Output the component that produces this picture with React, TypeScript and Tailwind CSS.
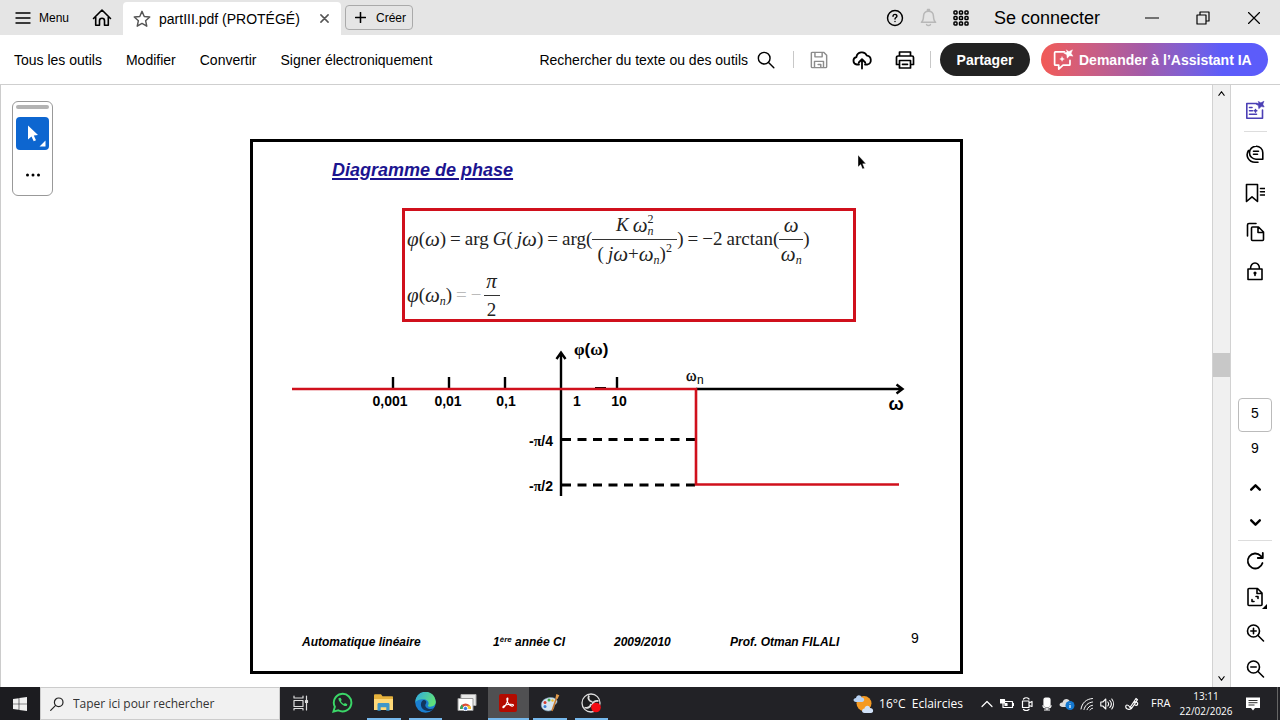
import type { ReactNode } from "react";

const sans = "font-['Liberation_Sans',Arial,sans-serif]";
const segoe = "font-['Open_Sans','Noto_Sans',sans-serif]";

interface IconProps {
  children: ReactNode;
  className?: string;
  box?: number;
  stroke?: number;
}

function Icon({ children, className = "size-5", box = 20, stroke = 1.6 }: IconProps) {
  return (
    <svg
      viewBox={`0 0 ${box} ${box}`}
      className={`shrink-0 ${className}`}
      fill="none"
      stroke="currentColor"
      strokeWidth={stroke}
      strokeLinecap="round"
      strokeLinejoin="round"
      aria-hidden="true"
    >
      {children}
    </svg>
  );
}

function TitleBar() {
  return (
    <header className="flex h-[35px] shrink-0 items-stretch bg-[#e5e5e5]">
      <button className="flex items-center gap-2 pl-[15px] text-xs">
        <Icon className="size-4" box={16} stroke={1.4}>
          <path d="M1 3h14M1 8h14M1 13h14" />
        </Icon>
        Menu
      </button>
      <button className="ml-[23px] mr-[11px] flex items-center" aria-label="Accueil">
        <Icon>
          <path d="M1.500 10.500 10 2l8.500 8.500M3.700 9v8.200h3.800v-4.400a2.500 2.500 0 0 1 5 0v4.400h3.800V9" />
        </Icon>
      </button>
      <div className="mt-[2px] flex w-[218px] items-center rounded-t bg-white pl-[10px] pr-3 text-sm">
        <Icon className="size-[18px] text-[#555]">
          <path d="m10 1.500 2.500 5.700 6.100.600-4.600 4.100 1.300 6.100L10 14.900 4.700 18 6 11.900 1.400 7.800l6.100-.6z" />
        </Icon>
        <span className="ml-2">partIII.pdf (PROTÉGÉ)</span>
        <button className="ml-auto" aria-label="Fermer l'onglet">
          <Icon className="size-[9px] text-[#555]" box={10} stroke={1.7}>
            <path d="m1 1 8 8M9 1 1 9" />
          </Icon>
        </button>
      </div>
      <button className="my-auto ml-1 flex h-[25px] w-[68px] items-center gap-[10px] rounded border border-[#aaa] pl-[9px] text-xs">
        <Icon className="size-[11px]" box={10} stroke={1.4}>
          <path d="M5 .5v9M.5 5h9" />
        </Icon>
        <span>Créer</span>
      </button>

      <div className="ml-auto flex items-stretch pr-px">
        <button className="flex w-[33px] items-center justify-center" aria-label="Aide">
          <Icon className="size-[18px]">
            <circle cx="10" cy="10" r="8.300" />
            <path d="M7.800 8.100c0-3 4.600-2.700 4.300-.1-.1 1.500-2.100 1.500-2.100 3.200M10 13.800v.2" />
          </Icon>
        </button>
        <button className="flex w-[33px] items-center justify-center text-[#b8b8b8]" aria-label="Notifications">
          <Icon className="size-[19px]">
            <path d="M2.500 15c2-1.500 2.200-3 2.300-6.500C4.900 5.200 7 3.300 10 3.300s5.100 1.900 5.200 5.200c.1 3.500.3 5 2.300 6.500zM9 3V1.500h2V3M8 17.500c.8 1.200 3.200 1.200 4 0" />
          </Icon>
        </button>
        <button className="flex w-[33px] items-center justify-center" aria-label="Applications">
          <Icon className="size-4" box={16} stroke={1.5}>
            {[2.5, 8, 13.5].map((y) =>
              [2.5, 8, 13.5].map((x) => <rect key={`${x}-${y}`} x={x - 1.5} y={y - 1.5} width="3" height="3" rx=".8" />)
            )}
          </Icon>
        </button>
        <button className="mr-[10px] px-4 text-lg leading-5">Se connecter</button>
        <button className="flex w-[51px] items-center justify-center" aria-label="Réduire">
          <Icon className="size-[14px]" box={14} stroke={1.2}>
            <path d="M0 7h14" />
          </Icon>
        </button>
        <button className="flex w-[51px] items-center justify-center" aria-label="Restaurer">
          <Icon className="size-[14px]" box={14} stroke={1.2}>
            <path d="M1 4h9v9H1zM4 4V1h9v9h-3" />
          </Icon>
        </button>
        <button className="flex w-[51px] items-center justify-center" aria-label="Fermer">
          <Icon className="size-3" box={12} stroke={1.2}>
            <path d="m.5.5 11 11M11.500.5l-11 11" />
          </Icon>
        </button>
      </div>
    </header>
  );
}

function Toolbar() {
  return (
    <nav className="flex h-[50px] shrink-0 items-center border-b border-[#cfcfcf] bg-white pl-[14px] pr-3 text-sm">
      <div className="flex gap-6">
        <button>Tous les outils</button>
        <button>Modifier</button>
        <button>Convertir</button>
        <button>Signer électroniquement</button>
      </div>
      <button className="ml-auto flex items-center gap-[9px]">
        <span>Rechercher du texte ou des outils</span>
        <Icon className="size-[18px]">
          <circle cx="8" cy="8" r="6.500" />
          <path d="m12.800 12.800 5.900 5.900" />
        </Icon>
      </button>
      <span className="ml-[18px] mr-[3px] h-[17px] w-px bg-[#c8c8c8]" />
      <button className="flex w-[43px] justify-center text-[#8c8c8c]" aria-label="Enregistrer">
        <Icon className="size-[18px]">
          <path d="M2.500 1.500h12.700l3.300 3.300v12.700a1 1 0 0 1-1 1h-15a1 1 0 0 1-1-1v-15a1 1 0 0 1 1-1zM5.500 1.500v5h8v-5M5 18.500v-7h10v7M9 15h3v3" />
        </Icon>
      </button>
      <button className="flex w-[43px] justify-center" aria-label="Envoyer">
        <Icon stroke={1.8}>
          <path d="M7 14.500H4.800a3.700 3.700 0 0 1-.4-7.300 5.500 5.500 0 0 1 10.500-1.500 4.500 4.500 0 0 1 .6 8.800H13M10 18.500v-9M6.800 12.500 10 9.200l3.200 3.300" />
        </Icon>
      </button>
      <button className="flex w-[43px] justify-center" aria-label="Imprimer">
        <Icon stroke={1.7}>
          <path d="M4.500 6V2h11v4M4.500 14.500H1.500v-7a1.500 1.500 0 0 1 1.500-1.500h14a1.500 1.500 0 0 1 1.500 1.500v7h-3M4.500 10.500h11v7.500h-11zM7.500 14.300h5" />
        </Icon>
      </button>
      <span className="ml-1 mr-[9px] h-[17px] w-px bg-[#c8c8c8]" />
      <button className="mr-[11px] h-[33px] w-[90px] rounded-full bg-[#222] font-bold text-white">Partager</button>
      <button className="flex h-[33px] w-[227px] items-center gap-[5px] rounded-full bg-linear-to-r from-[#f25a55] via-[#a35aa8] via-45% to-[#5c5cfa] to-80% pl-3 font-bold text-white">
        <Icon className="size-[21px]" box={22} stroke={1.8}>
          <path d="M12 3H2.500a.8.8 0 0 0-.8.8v12.400c0 .5.300.8.800.8H6v4l4.500-4H17c.5 0 .8-.3.800-.8V12" />
          <path d="m14 1 2.700 1.700L20.500.8 19 4.500l2 3-3.500-.5-2.700 2.600-.4-3.700-3.200-1.700 3.500-1z" fill="currentColor" strokeWidth=".4" />
          <path d="m9.500 8 .8 1.700 1.700.8-1.700.8-.8 1.700-.8-1.700-1.700-.8 1.700-.8z" fill="currentColor" strokeWidth=".3" />
        </Icon>
        <span>Demander à l’Assistant IA</span>
      </button>
    </nav>
  );
}

function ToolPalette() {
  return (
    <aside className="absolute left-[11px] top-4 flex h-[95px] w-[41px] flex-col items-center rounded-md border border-[#999] bg-white pt-[3px]">
      <span className="h-1 w-[33px] rounded-sm bg-[#b3b3b3]" />
      <button className="mt-2 flex size-[33px] items-center justify-center rounded-sm bg-[#0d66d0] text-white" aria-label="Sélectionner">
        <svg viewBox="0 0 33 33" className="size-[33px]" fill="currentColor" aria-hidden="true">
          <path d="M12 8.500v14l3.500-3 2.200 4.700 2.300-1-2.200-4.700 4.200-.4zM29.500 23.500v6h-6z" />
        </svg>
      </button>
      <button className="mt-[22px]" aria-label="Plus d'outils">
        <svg viewBox="0 0 16 6" className="h-[6px] w-4" aria-hidden="true">
          <circle cx="2.500" cy="3" r="1.500" />
          <circle cx="8" cy="3" r="1.500" />
          <circle cx="13.500" cy="3" r="1.500" />
        </svg>
      </button>
    </aside>
  );
}

function Fraction({ top, bottom, className = "" }: { top: ReactNode; bottom: ReactNode; className?: string }) {
  return (
    <span className={`flex flex-col items-center ${className}`}>
      <span className="flex h-7 items-center">{top}</span>
      <span className="h-px w-full bg-[#333]" />
      <span className="flex h-7 items-center">{bottom}</span>
    </span>
  );
}

function Omega({ sub, sup }: { sub?: string; sup?: string }) {
  return (
    <span className="inline-flex items-center">
      <i className="text-[21px]">ω</i>
      {sub && (
        <span className="flex flex-col text-xs leading-3">
          <span className="h-3">{sup}</span>
          <i className="h-3">{sub}</i>
        </span>
      )}
    </span>
  );
}

function Formula() {
  return (
    <div className="ml-[149px] mt-6 h-[114px] w-[454px] border-3 border-[#d0101c] pl-[2px] font-['Liberation_Serif','Times_New_Roman',serif] text-[19px] leading-6 text-[#222]">
      <div className="flex h-[56px] items-center gap-1 whitespace-nowrap">
        <span className="flex items-center"><i className="text-[21px]">φ</i>(<Omega />)</span>
        <span>=</span>
        <span>arg</span>
        <span className="flex items-center"><i>G</i>(<i className="pl-1">j</i><Omega />)</span>
        <span>=</span>
        <span className="flex items-center">
          arg(
          <Fraction
            className="w-[85px]"
            top={<span className="flex gap-1"><i>K</i><Omega sub="n" sup="2" /></span>}
            bottom={
              <span className="flex items-center">
                (<i className="pl-1">j</i><Omega />+<Omega sub="n" />)
                <span className="flex h-6 flex-col text-xs leading-3">2</span>
              </span>
            }
          />
          )
        </span>
        <span>=</span>
        <span>−2</span>
        <span className="flex items-center">
          arctan(
          <Fraction className="w-6" top={<Omega />} bottom={<Omega sub="n" />} />
          )
        </span>
      </div>
      <div className="flex h-[56px] items-center gap-1 whitespace-nowrap">
        <span className="flex items-center"><i className="text-[21px]">φ</i>(<Omega sub="n" />)</span>
        <span className="text-[#bbb]">=</span>
        <span className="flex items-center gap-[2px]">
          <span className="text-[#bbb]">−</span>
          <Fraction className="w-4" top={<i className="text-[21px]">π</i>} bottom="2" />
        </span>
      </div>
    </div>
  );
}

const ticks = [
  { x: 103, label: "0,001", at: 100 },
  { x: 159, label: "0,01", at: 158 },
  { x: 215, label: "0,1", at: 216 },
  { x: 271, label: "1", at: 287 },
  { x: 327, label: "10", at: 329 },
];

const greek = "font-['Liberation_Serif','Times_New_Roman',serif]";

function PhaseChart() {
  return (
    <svg viewBox="0 0 616 166" className="ml-[37px] mt-[14px] h-[166px] w-[616px] shrink-0" role="img" aria-label="Diagramme de phase">
      <g stroke="#000" strokeWidth="2.400" fill="none">
        <path d="M406 53h206M606.500 48.500l6 4.500-6 4.500M271 160V17M266.500 23l4.500-6.500 4.500 6.500" />
        <path d="M272 103.500h134M272 149h134" strokeWidth="3" strokeDasharray="9 6.500" />
        {ticks.map((t) => t.label !== "1" && <path key={t.x} d={`M${t.x} 41v12`} />)}
        <path d="M305 51.500h11" strokeWidth="1" />
      </g>
      <path d="M2 53h404v95.500h203" fill="none" stroke="#d0101c" strokeWidth="2.600" />
      <g className="font-['Liberation_Sans',Arial,sans-serif] font-bold" fontSize="14" textAnchor="middle">
        {ticks.map((t) => (
          <text key={t.x} x={t.at} y="70">{t.label}</text>
        ))}
        <text x="251" y="110">-<tspan className={greek}>π</tspan>/4</text>
        <text x="251" y="155">-<tspan className={greek}>π</tspan>/2</text>
        <text x="606" y="74" fontSize="18">ω</text>
      </g>
      <text x="284" y="19" fontSize="17" className="font-['Liberation_Sans',Arial,sans-serif] font-bold">
        <tspan className={greek}>φ</tspan>(<tspan className={greek}>ω</tspan>)
      </text>
      <text x="396" y="45" fontSize="16" className={greek} stroke="#000" strokeWidth=".3">ω</text>
      <text x="407" y="48" fontSize="12" className="font-['Liberation_Sans',Arial,sans-serif]">n</text>
    </svg>
  );
}

function Slide() {
  return (
    <article className="flex h-[535px] w-[713px] shrink-0 flex-col border-3 border-black bg-white">
      <h1 className="ml-[79px] mt-[14px] text-lg font-bold italic leading-7 text-[#1c1490] underline decoration-2 underline-offset-2">
        Diagramme de phase
      </h1>
      <Formula />
      <PhaseChart />
      <footer className="mb-[19px] ml-[49px] mt-auto flex items-baseline whitespace-nowrap text-xs font-bold italic leading-5">
        <span className="w-[191px]">Automatique linéaire</span>
        <span className="w-[121px]">1<sup className="text-[8px]">ère</sup> année CI</span>
        <span className="w-[116px]">2009/2010</span>
        <span className="w-[181px]">Prof. Otman FILALI</span>
        <span className="self-start text-sm font-normal not-italic leading-3">9</span>
      </footer>
    </article>
  );
}

function Scrollbar() {
  return (
    <div className="flex w-[19px] shrink-0 flex-col items-center border-x border-[#d2d2d2] bg-[#f0f0f0]">
      <button className="flex h-[17px] items-center" aria-label="Défiler vers le haut">
        <Icon className="size-[7px]" box={8} stroke={1.4}><path d="m1 6 3-4 3 4" /></Icon>
      </button>
      <span className="grow-[251]" />
      <span className="h-6 w-full bg-[#c8c8c8]" />
      <span className="grow-[293]" />
      <button className="flex h-[17px] items-center" aria-label="Défiler vers le bas">
        <Icon className="size-[7px]" box={8} stroke={1.4}><path d="m1 2 3 4 3-4" /></Icon>
      </button>
    </div>
  );
}

function RailButton({ label, className, children }: { label: string; className: string; children: ReactNode }) {
  return (
    <button className={`flex w-full shrink-0 items-center justify-center ${className}`} aria-label={label}>
      {children}
    </button>
  );
}

function RightRail() {
  return (
    <aside className="flex w-[49px] shrink-0 flex-col items-center bg-white pr-px pt-[5px]">
      <RailButton label="Assistant IA" className="h-[39px] text-[#4b3fb5]">
        <Icon>
          <path d="M12 3.500H1.800v14.700h15.700V10M4.500 7.500H7M4.500 10.800h3M4.500 14.300h7" />
          <path d="m13.500 1.500 2.300 1.300L19 1.200l-1.200 3 1.400 2.800-3-.4-2.400 2.200-.5-3.200-2.400-1.500 2.700-.5z" fill="currentColor" strokeWidth=".5" />
          <path d="M10.500 9.500v2.600M9.200 10.800h2.600" />
        </Icon>
      </RailButton>
      <span className="my-[2px] h-px w-[23px] shrink-0 bg-[#ddd]" />
      <RailButton label="Commentaires" className="h-[39px]">
        <Icon>
          <path d="M11 2.200a6.500 6.500 0 0 1 6.800 6.500v6.500H11a6.500 6.500 0 0 1 0-13zM8.500 7.300h5M8.500 10.300h4M3.500 6.500c-3.500 5.500.3 11.800 6.500 11.800h3" />
        </Icon>
      </RailButton>
      <RailButton label="Signets" className="h-[39px]">
        <Icon><path d="M1.500 1.500h11v17L7 13.800l-5.500 4.700zM15.500 5.500h4M15.500 8.800h4M15.500 12h4" /></Icon>
      </RailButton>
      <RailButton label="Pages" className="h-[39px]">
        <Icon><path d="M2.500 14V3a1.500 1.500 0 0 1 1.500-1.500h7M7.500 5h6l5 5v7.500a1 1 0 0 1-1 1h-10a1 1 0 0 1-1-1V6a1 1 0 0 1 1-1zM13 5v5.500h5.500" /></Icon>
      </RailButton>
      <RailButton label="Protection" className="h-[39px]">
        <Icon>
          <path d="M3 8h14v10.500H3zM5.500 8c-.3-8 9.300-8 9 0M10 12v2.500" />
          <circle cx="10" cy="12" r=".8" fill="currentColor" />
        </Icon>
      </RailButton>

      <input
        className="mt-auto h-[34px] w-[34px] shrink-0 rounded border border-[#bbb] pb-1 text-center text-sm"
        aria-label="Page"
        defaultValue="5"
      />
      <span className="mb-[11px] mt-[5px] text-sm leading-[22px]">9</span>
      <RailButton label="Page précédente" className="h-[35px]">
        <Icon className="size-[13px]" box={12} stroke={2.2}><path d="m2 8 4-4 4 4" /></Icon>
      </RailButton>
      <RailButton label="Page suivante" className="h-[35px]">
        <Icon className="size-[13px]" box={12} stroke={2.2}><path d="m2 4 4 4 4-4" /></Icon>
      </RailButton>
      <span className="mb-[2px] h-px w-[34px] shrink-0 bg-[#ddd]" />
      <RailButton label="Rotation" className="h-9">
        <Icon stroke={1.8}><path d="M17.500 12a7.500 7.500 0 1 1-1.800-7.200l1.500 1.700M17.800 2v5h-5" /></Icon>
      </RailButton>
      <RailButton label="Ajuster la page" className="relative h-9">
        <Icon>
          <path d="M4 1.500h8.500l4.500 4.500v11.500a1 1 0 0 1-1 1H4a1 1 0 0 1-1-1v-15a1 1 0 0 1 1-1zM12 1.500v5h5M11 9.500h2v2M9 14.500H7v-2" />
        </Icon>
        <svg viewBox="0 0 5 5" className="absolute bottom-[6px] right-3 size-[5px]" aria-hidden="true">
          <path d="M5 0v5H0z" />
        </svg>
      </RailButton>
      <RailButton label="Zoom avant" className="h-9">
        <Icon><circle cx="8.500" cy="8" r="6" /><path d="m13 12.500 5.500 5.500M8.500 5.300v5.400M5.800 8h5.400" /></Icon>
      </RailButton>
      <RailButton label="Zoom arrière" className="h-9">
        <Icon><circle cx="8.500" cy="8" r="6" /><path d="m13 12.500 5.500 5.500M5.800 8h5.400" /></Icon>
      </RailButton>
    </aside>
  );
}

function WhatsApp() {
  return (
    <svg viewBox="0 0 22 22" className="size-[21px]" fill="none" stroke="#3bd768" strokeWidth="2" aria-hidden="true">
      <path d="M1.500 20.500 3 15.500a9.200 9.200 0 1 1 3.500 3.600z" />
      <path d="M7 6.200c-1.600 2.400 5.500 9.900 8.400 8.400l.7-1.800-2.500-1.300-1.100 1c-1.300-.5-2.700-1.900-3.200-3.100l.9-1.100L9 6z" fill="#3bd768" stroke="none" />
    </svg>
  );
}

function Explorer() {
  return (
    <svg viewBox="0 0 20 17" className="h-[17px] w-5" aria-hidden="true">
      <path d="M0 1.500C0 .7.500.3 1 .3h6l1.500 2H18c.7 0 1 .4 1 1V16H0z" fill="#e6b23c" />
      <path d="M0 5h19v11H0z" fill="#ffd978" />
      <path d="M3.500 16.700V10.500c0-1 .5-1.500 1.500-1.500h9c1 0 1.500.5 1.500 1.500v6.200h-3.200v-3.500H6.700v3.500z" fill="#3f97c9" />
    </svg>
  );
}

function Edge() {
  return (
    <svg viewBox="0 0 20 20" className="size-[21px]" aria-hidden="true">
      <defs>
        <linearGradient id="edge-top" x1="0" y1="0" x2="1" y2=".4">
          <stop offset="0" stopColor="#2fa8e6" />
          <stop offset="1" stopColor="#5fe07a" />
        </linearGradient>
      </defs>
      <circle cx="10" cy="10" r="9.800" fill="#1a7fd0" />
      <path d="M.3 10A9.700 9.700 0 0 1 19.800 9c.2 3.500-2.500 5-5.200 5-2 0-2.800-.6-2-1.600C14 9.500 11.500 7 8 7 4 7 1 8.500.3 10z" fill="url(#edge-top)" />
      <path d="M8 7.500c-4 2-3 9.500 3.500 10.500 3 .4 5.500-.6 7-2.800-2.700 1.400-5.800 1.200-7.500-.3-1.500-1.300-1.500-2.800-.5-4.300 1-1.800-.5-3.100-2.500-3.100z" fill="#12365e" />
    </svg>
  );
}

function ChromeWindows() {
  return (
    <svg viewBox="0 0 20 17" className="h-[17px] w-5" aria-hidden="true">
      <path d="M4 .5h15v11H4z" fill="#e8e8e8" stroke="#aaa" />
      <path d="M1 4.500h15v12H1z" fill="#fff" stroke="#999" />
      <path d="M3 15a5.500 5.500 0 0 1 11 0z" fill="#dd4b39" />
      <path d="M3 15c0-2 .8-3.500 2-4.500L7 15z" fill="#3ba55b" />
      <path d="M14 15c0-1.500-.3-2.500-1-3.300H9L10 15z" fill="#f5c431" />
      <circle cx="8.500" cy="14.500" r="2.200" fill="#3b7de0" stroke="#fff" />
    </svg>
  );
}

function Acrobat() {
  return (
    <svg viewBox="0 0 18 18" className="size-[18px]" aria-hidden="true">
      <rect width="18" height="18" rx="2" fill="#b30b00" />
      <path d="M8.700 4c-1.600-.3-.6 3.200.7 5.500 1.300 2.100 4.900 3.600 5.100 1.800.2-1.400-4.600-1.300-7-.6-2.100.7-4.100 1.900-3.500 2.900 1.100 1.200 5.900-7.600 4.700-9.600z" fill="none" stroke="#fff" strokeWidth="1.100" />
    </svg>
  );
}

function Paint() {
  return (
    <svg viewBox="0 0 20 20" className="size-5" aria-hidden="true">
      <path d="M2 9c2-4 9-5.500 13-3.500 3 1.700 2.500 4.500 0 6-1.500 1-.5 3-2 4.800-2 2.300-8 2.400-10.500-.8C1 13.500 1 11 2 9z" fill="#d5e5f0" stroke="#7ba2c0" strokeWidth=".6" />
      <circle cx="5" cy="9.500" r="1.500" fill="#d43c30" />
      <circle cx="9" cy="7" r="1.500" fill="#45a84c" />
      <circle cx="5" cy="13.500" r="1.500" fill="#3c7ecf" />
      <circle cx="12.500" cy="7.500" r="1.200" fill="#f0c030" />
      <path d="m12 18 4.500-13" stroke="#c77a30" strokeWidth="1.600" />
      <path d="m15.500 5 .8-4 3 1.200L17.500 6z" fill="#e29b4b" />
    </svg>
  );
}

function Obs() {
  return (
    <svg viewBox="0 0 20 20" className="size-5" aria-hidden="true">
      <circle cx="10" cy="10" r="9" fill="#1c1c1e" stroke="#ddd" strokeWidth="1.300" />
      <path d="M8 2.500c-1.500 3 0 6 3.500 6.300M17.500 8c-3.500-.7-6.300 1-6 4.500M3.500 14.500c3 1 6-.2 6.500-3.700" fill="none" stroke="#ddd" strokeWidth="1.800" />
      <circle cx="15" cy="14.500" r="4.800" fill="#f40b12" />
    </svg>
  );
}

const apps = [
  {
    name: "Vue des tâches",
    icon: (
      <Icon className="size-4 text-[#ddd]" box={16} stroke={1.2}>
        <path d="M1 1v2h9V1M1 5.500h9v6H1zM1 15v-1.500h9V15M13.500 1v14M12.500 5.500h2v2h-2z" />
      </Icon>
    ),
    bar: "",
  },
  { name: "WhatsApp", icon: <WhatsApp />, bar: "" },
  { name: "Explorateur", icon: <Explorer />, bar: "mx-1 bg-[#76b9ed]" },
  { name: "Edge", icon: <Edge />, bar: "mx-1 bg-[#76b9ed]" },
  { name: "Chrome", icon: <ChromeWindows />, bar: "" },
  { name: "Acrobat", icon: <Acrobat />, bar: "bg-[#76b9ed]", active: true },
  { name: "Paint", icon: <Paint />, bar: "mx-1 bg-[#76b9ed]" },
  { name: "OBS", icon: <Obs />, bar: "mx-1 bg-[#76b9ed]" },
];

function Tray() {
  return (
    <div className="ml-auto flex items-center whitespace-nowrap">
      <button className="flex items-center gap-[5px] text-xs">
        <svg viewBox="0 0 21 20" className="h-5 w-[21px]" aria-hidden="true">
          <circle cx="11" cy="9.500" r="7.500" fill="#f59a23" />
          <path d="M3 8C-.5 8 0 4 3 4c.5-3.500 5-3.500 5.500-.5C12 3 12 8 9 8z" fill="#b9d3f3" />
          <path d="M11.500 19c-3.500 0-3-4.500 0-4.500.5-3.500 5-3.500 5.500-.5 4 0 4 5 1 5z" fill="#d2e2f8" />
        </svg>
        <span>16°C&nbsp; Eclaircies</span>
      </button>
      <div className="ml-[14px] flex [&>button]:flex [&>button]:h-5 [&>button]:w-5 [&>button]:items-center [&>button]:justify-center">
        <button aria-label="Icônes cachées">
          <Icon className="size-3" box={12} stroke={1.2}><path d="m1 8.500 5-5 5 5" /></Icon>
        </button>
        <button aria-label="Batterie">
          <Icon className="size-[14px]" box={14} stroke={1.2}>
            <path d="M3 4.500h9.500v6H3zM13.500 6.500v2" />
            <path d="M5 6.500h2v2H5zM.5 2.500h4v3.500h-4z" fill="currentColor" />
          </Icon>
        </button>
        <button aria-label="Réunion">
          <Icon className="size-[14px]" box={14} stroke={1.2}>
            <path d="M2.500 4h6.500v6.500H2.500zM9 6l3-1.500v5L9 8.500M3.500 2c1.500-1.500 4-1.500 5.500 0M3.500 12.500c1.500 1.300 4 1.300 5.500 0" />
          </Icon>
        </button>
        <button aria-label="Micro">
          <Icon className="size-[14px]" box={14} stroke={1.2}>
            <rect x="4" y="1" width="6" height="8.500" rx="1.500" fill="currentColor" />
            <path d="M3 8.500c0 3.500 8 3.500 8 0M7 11v2M4.500 13h5" />
          </Icon>
        </button>
        <button aria-label="OneDrive">
          <svg viewBox="0 0 16 14" className="h-[14px] w-4" aria-hidden="true">
            <path d="M3 10C-1 9.500.500 5 3.500 5.500 4.500 1 10 1 11 5c4 .5 4 5 0 5z" fill="#ddd" />
            <circle cx="11" cy="8.500" r="4.500" fill="#1478d0" />
            <path d="M11 8v3M11 6v.5" stroke="#fff" strokeWidth="1.200" />
          </svg>
        </button>
        <button aria-label="Wi-Fi">
          <Icon className="size-[14px]" box={14} stroke={1}>
            <path d="M1 12C2 6 6 2 12.500 1.500M4 12.500C5 8.500 8 5.500 12.500 5M7 12.700c.8-2.200 2.700-4 5.500-4.400M10 13c.5-1 1.300-1.500 2.500-1.700" />
          </Icon>
        </button>
        <button aria-label="Volume">
          <Icon className="size-[14px]" box={14} stroke={1.1}>
            <path d="M.8 5v4h2l3 3V2l-3 3zM7.800 5c1 1.200 1 2.800 0 4M9.800 3.500c1.800 2 1.800 5 0 7M11.800 2c2.200 2.800 2.200 7 0 10" />
          </Icon>
        </button>
      </div>
      <button className="ml-2 flex" aria-label="Stylet">
        <Icon className="size-[14px]" box={14} stroke={1.2}>
          <path d="M5 10.500 11 1.500l1.500 1.200-6 8.800zM5 10.500C3 7 .5 7.500.8 10c.3 3 5.500 3 5.800.5M8 6c2-2 5.500-1 4.500 1.500-.4 1.200-2.500 1-3 0" />
        </Icon>
      </button>
      <span className="ml-3 w-[22px] text-[11px]">FRA</span>
      <div className="ml-[5px] w-[56px] text-center text-[10px] leading-[15px]">
        <div>13:11</div>
        <div>22/02/2026</div>
      </div>
      <button className="ml-3 mr-[17px]" aria-label="Centre de notifications">
        <svg viewBox="0 0 14 14" className="size-[14px]" aria-hidden="true">
          <path d="M0 .5h14v10.500H9L7 13.500 5 11H0z" fill="#fff" />
          <path d="M2.500 3.500h9M2.500 5.700h9M2.500 8h6" stroke="#333" />
        </svg>
      </button>
      <span className="mr-[2px] h-[33px] w-px bg-[#666]" />
    </div>
  );
}

function Taskbar() {
  return (
    <footer className={`flex h-[33px] shrink-0 bg-[#222226] text-white ${segoe}`}>
      <button className="flex w-10 items-center justify-center bg-[#1c1c20]" aria-label="Démarrer">
        <svg viewBox="0 0 14 14" className="size-[14px]" fill="#f0f0f0" aria-hidden="true">
          <path d="m0 2 5.700-.8v5.500H0zM6.300 1.100 14 0v6.700H6.300zM0 7.300h5.700v5.500L0 12zM6.300 7.300H14V14l-7.700-1.100z" />
        </svg>
      </button>
      <label className="flex w-[240px] items-center gap-[9px] border border-[#ccc] bg-[#f1f1f1] pl-[9px] text-[#222]">
        <Icon className="size-[14px]" box={14} stroke={1.2}>
          <circle cx="8.700" cy="5.300" r="4.300" />
          <path d="M5.600 8.400.7 13.300" />
        </Icon>
        <input
          className="w-[190px] bg-transparent text-xs outline-none placeholder:text-[#333]"
          placeholder="Taper ici pour rechercher"
          aria-label="Rechercher"
        />
      </label>
      <div className="grid w-[332px] grid-cols-8">
        {apps.map((app) => (
          <button key={app.name} className={`flex flex-col ${app.active ? "bg-[#505052]" : ""}`} aria-label={app.name}>
            <span className="flex w-full flex-1 items-center justify-center">{app.icon}</span>
            <span className={`h-[2px] self-stretch ${app.bar}`} />
          </button>
        ))}
      </div>
      <Tray />
    </footer>
  );
}

export default function App() {
  return (
    <div className={`flex h-screen flex-col overflow-hidden bg-white text-black ${sans}`}>
      <TitleBar />
      <Toolbar />
      <div className="flex min-h-0 flex-1">
        <main className="relative flex min-w-0 flex-1 justify-center overflow-hidden border-l border-[#ccc] pt-[54px]">
          <Slide />
          <ToolPalette />
          <svg viewBox="0 0 10 16" className="absolute left-[856px] top-[69px] h-4 w-[10px]" aria-hidden="true">
            <path d="M1 1v12l2.700-2.500L5.500 15l2-.8-1.800-4.400H9z" stroke="#fff" strokeWidth=".4" />
          </svg>
        </main>
        <Scrollbar />
        <RightRail />
      </div>
      <Taskbar />
    </div>
  );
}
